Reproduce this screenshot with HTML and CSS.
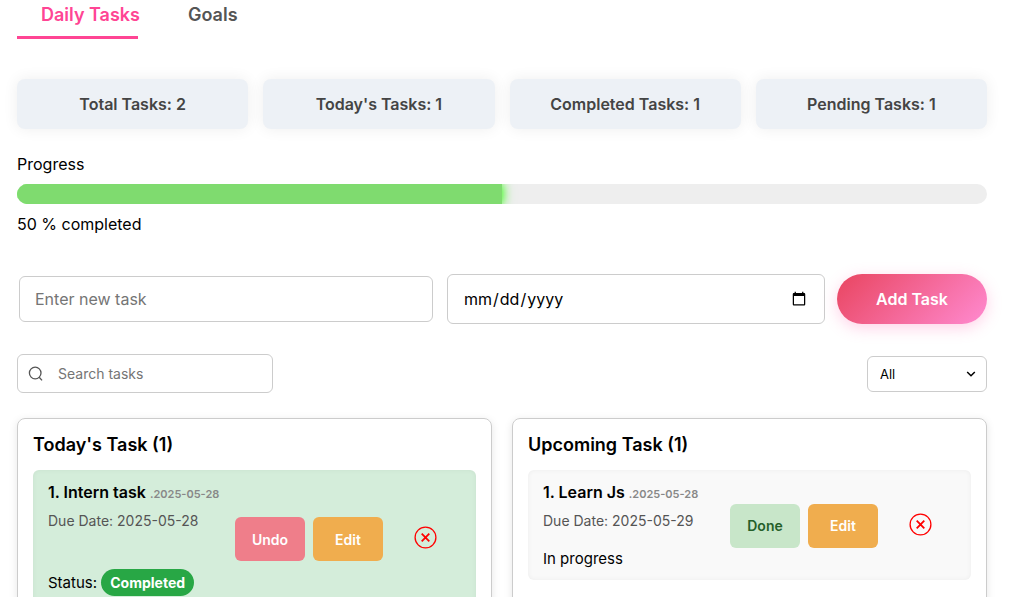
FILE: index.html
```html
<!DOCTYPE html>
<html lang="en">
<head>
<meta charset="utf-8">
<meta name="viewport" content="width=device-width, initial-scale=1">
<title>Daily Tasks</title>
<link rel="stylesheet" href="styles.css">
</head>
<body>
<main class="page">
  <nav class="tabs">
    <button class="tab tab-active" type="button">Daily Tasks</button>
    <button class="tab" type="button">Goals</button>
  </nav>

  <section class="stats">
    <div class="stat">Total Tasks: 2</div>
    <div class="stat">Today's Tasks: 1</div>
    <div class="stat">Completed Tasks: 1</div>
    <div class="stat">Pending Tasks: 1</div>
  </section>

  <section class="progress">
    <p id="progress-label">Progress</p>
    <div class="track" role="progressbar" aria-labelledby="progress-label" aria-valuenow="50" aria-valuemin="0" aria-valuemax="100">
      <div class="fill" style="width: 50%"></div>
    </div>
    <p>50 % completed</p>
  </section>

  <form class="task-form">
    <input class="field task-name" type="text" placeholder="Enter new task" aria-label="Enter new task">
    <input class="field task-date" type="date" aria-label="Due date">
    <button class="add" type="button">Add Task</button>
  </form>

  <div class="toolbar">
    <label class="search">
      <svg class="search-icon" viewBox="0 0 16 16" aria-hidden="true"><circle cx="7.2" cy="7" r="5.8"/><path d="M11.2 11.2 14 14.4"/></svg>
      <input class="search-input" type="search" placeholder="Search tasks" aria-label="Search tasks">
    </label>
    <div class="filter-box">
      <select class="filter" aria-label="Filter tasks">
        <option>All</option>
        <option>Completed</option>
        <option>Pending</option>
      </select>
      <svg class="chevron" viewBox="0 0 10 10" aria-hidden="true"><path d="m1.2 3 3.8 3.8L8.8 3"/></svg>
    </div>
  </div>

  <div class="columns">
    <section class="column">
      <h2 class="column-title">Today's Task (1)</h2>
      <article class="task task-done">
        <div class="info">
          <h3 class="task-title">1. Intern task <small class="created">.2025-05-28</small></h3>
          <p class="due">Due Date: 2025-05-28</p>
          <p class="status status-done">Status: <span class="pill">Completed</span></p>
        </div>
        <div class="actions">
          <button class="action undo" type="button">Undo</button>
          <button class="action edit" type="button">Edit</button>
          <button class="action remove" type="button" aria-label="Delete task">
            <svg class="remove-icon" viewBox="0 0 24 24" aria-hidden="true"><circle cx="11.5" cy="11.5" r="10.4"/><path class="cross" d="m7.7 7.7 7.6 7.6m0-7.6-7.6 7.6"/></svg>
          </button>
        </div>
      </article>
    </section>
    <section class="column">
      <h2 class="column-title">Upcoming Task (1)</h2>
      <article class="task">
        <div class="info">
          <h3 class="task-title">1. Learn Js <small class="created">.2025-05-28</small></h3>
          <p class="due">Due Date: 2025-05-29</p>
          <p class="status">In progress</p>
        </div>
        <div class="actions">
          <button class="action done" type="button">Done</button>
          <button class="action edit" type="button">Edit</button>
          <button class="action remove" type="button" aria-label="Delete task">
            <svg class="remove-icon" viewBox="0 0 24 24" aria-hidden="true"><circle cx="11.5" cy="11.5" r="10.4"/><path class="cross" d="m7.7 7.7 7.6 7.6m0-7.6-7.6 7.6"/></svg>
          </button>
        </div>
      </article>
    </section>
  </div>
</main>
</body>
</html>
```
FILE: styles.css
```css
* {
  box-sizing: border-box;
}

body {
  margin: 0;
  background: #fff;
  color: #000;
  font: 16px/20px Inter, "Liberation Sans", sans-serif;
}

h2, h3, p {
  margin: 0;
}

button, input, select {
  font-family: inherit;
  margin: 0;
}

button {
  cursor: pointer;
}

.page {
  padding: 0 24px 16px 17px;
}

.tabs {
  position: relative;
  display: flex;
  height: 39px;
}

.tabs::after {
  content: "";
  position: absolute;
  left: 0;
  bottom: 0;
  width: 121px;
  height: 3px;
  background: #ff4594;
}

.tab {
  border: 0;
  padding: 0 24px 10px;
  background: none;
  color: #555;
  font-size: 18px;
  font-weight: 600;
  line-height: 28px;
}

.tab-active {
  color: #ff4594;
}

.stats {
  display: grid;
  grid-template-columns: repeat(4, 1fr);
  gap: 15px;
  margin-top: 40px;
}

.stat {
  padding: 15px;
  border-radius: 8px;
  background: #edf1f6;
  box-shadow: 0 0 15px rgba(0, 0, 0, 0.07);
  color: #444;
  font-weight: 600;
  text-align: center;
}

.progress {
  display: grid;
  gap: 10px;
  margin-top: 25px;
}

.track {
  height: 20px;
  border-radius: 10px;
  background: #eee;
  overflow: hidden;
}

.fill {
  height: 100%;
  background: #7fdb6f;
  box-shadow: 0 0 10px #3f1, 0 0 15px rgba(51, 255, 17, 0.4);
}

.task-form {
  display: grid;
  grid-template-columns: 418fr 378fr 150px;
  gap: 12px;
  align-items: center;
  margin-top: 40px;
}

.field {
  min-width: 0;
  border: 1px solid #ccc;
  border-radius: 6px;
  padding: 0 15px;
  background: #fff;
  color: #000;
  font-size: 16px;
}

.field::placeholder, .search-input::placeholder {
  color: #757575;
}

.task-name {
  height: 46px;
  margin: 0 2px;
}

.task-date {
  height: 50px;
}

.add {
  height: 50px;
  border: 0;
  border-radius: 25px;
  background: linear-gradient(135deg, #e94560, #ff8ad0);
  box-shadow: 0 4px 15px rgba(255, 105, 180, 0.3);
  color: #fff;
  font-size: 16px;
  font-weight: 600;
}

.toolbar {
  display: flex;
  align-items: center;
  justify-content: space-between;
  margin-top: 30px;
}

.search {
  display: flex;
  align-items: center;
  gap: 14px;
  width: 256px;
  height: 39px;
  border: 1px solid #ccc;
  border-radius: 6px;
  padding: 0 10px;
}

.search-icon {
  flex: none;
  width: 16px;
  height: 16px;
  fill: none;
  stroke: #555;
  stroke-width: 1.3;
}

.search-input {
  flex: 1;
  min-width: 0;
  border: 0;
  padding: 0;
  background: none;
  outline: 0;
  font-size: 14px;
}

.filter-box {
  position: relative;
  width: 120px;
}

.filter {
  display: block;
  width: 100%;
  height: 36px;
  appearance: none;
  border: 1px solid #ccc;
  border-radius: 6px;
  padding: 0 12px;
  background: #fff;
  color: #000;
  font-size: 13px;
}

.chevron {
  position: absolute;
  top: 13px;
  right: 11px;
  width: 10px;
  height: 10px;
  fill: none;
  stroke: #000;
  stroke-width: 1.5;
  pointer-events: none;
}

.columns {
  display: grid;
  grid-template-columns: 1fr 1fr;
  gap: 20px;
  margin-top: 25px;
}

.column {
  border: 1px solid #ccc;
  border-radius: 8px;
  padding: 15px;
  box-shadow: 0 2px 8px rgba(0, 0, 0, 0.1);
}

.column-title {
  font-size: 18px;
  font-weight: 600;
  line-height: 22px;
}

.task {
  display: flex;
  align-items: center;
  justify-content: space-between;
  margin-top: 14px;
  border-radius: 6px;
  padding: 12px 15px 11px;
  background: #f9f9f9;
  box-shadow: inset 0 0 5px rgba(0, 0, 0, 0.05);
}

.task-done {
  background: #d4edda;
}

.task-title {
  font-size: 16px;
  font-weight: 600;
}

.created {
  color: #888;
  font-size: 11px;
  line-height: 1;
}

.due {
  margin-top: 9px;
  color: #555;
  font-size: 14px;
}

.status {
  margin-top: 18px;
  font-size: 15px;
}

.status-done {
  margin-top: 38px;
  line-height: 27px;
}

.pill {
  display: inline-block;
  border-radius: 14px;
  padding: 0 9px;
  background: #28a745;
  color: #fff;
  font-size: 14px;
  font-weight: 700;
}

.actions {
  display: flex;
  gap: 8px;
}

.action {
  width: 70px;
  height: 44px;
  border: 0;
  border-radius: 6px;
  padding: 0;
  color: #fff;
  font-size: 14px;
  font-weight: 600;
}

.undo {
  background: #ef7e8a;
}

.edit {
  background: #f0ad4e;
}

.done {
  background: #c8e6c9;
  color: #256029;
}

.remove {
  display: flex;
  justify-content: center;
  padding-top: 9px;
  background: none;
}

.remove-icon {
  width: 24px;
  height: 24px;
  fill: none;
  stroke: #f00;
  stroke-width: 1.3;
}

.cross {
  stroke-width: 1.8;
}
```
